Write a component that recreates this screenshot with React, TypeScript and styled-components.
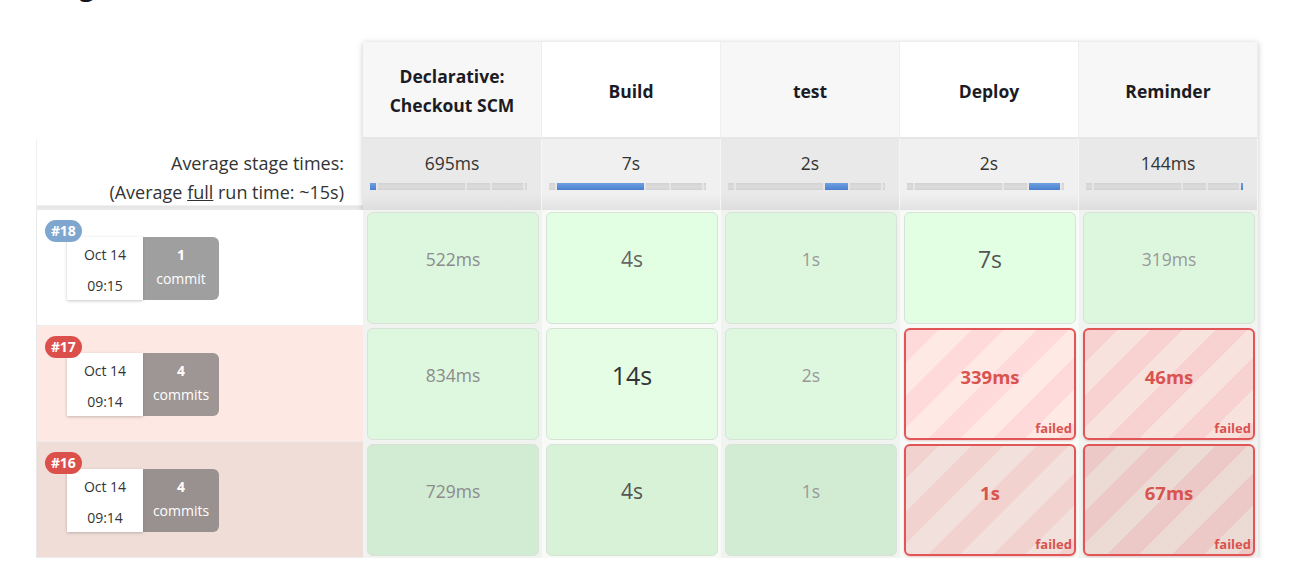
import React from 'react';
import styled, { createGlobalStyle, css } from 'styled-components';

const Global = createGlobalStyle`
  html, body { margin: 0; padding: 0; background: #fff; }
  body {
    font-family: "Open Sans", "Noto Sans", "DejaVu Sans", sans-serif;
    color: #333;
    overflow: hidden;
  }
`;

const Page = styled.div`
  padding-left: 36px;
`;

const Heading = styled.h2`
  margin: -29px 0 0 2px;
  height: 71px;
  font-size: 26px;
  line-height: 30px;
  font-weight: 700;
  color: #14141f;
`;

const Board = styled.div`
  display: flex;
  align-items: flex-start;
`;

const Labels = styled.div`
  width: 327px;
  display: flex;
  flex-direction: column;
`;

const HeaderSpacer = styled.div`
  height: 97px;
`;

const AvgLabel = styled.div`
  height: 71px;
  box-sizing: border-box;
  padding: 10px 19px 0 0;
  text-align: right;
  font-size: 18px;
  line-height: 29px;
  color: #333;
  border-left: 1px solid #f0f0f0;
  background: linear-gradient(#fff 0, #fff 66px, #e4e4e4 67px, #ececec 71px);
`;

const Underlined = styled.span`
  text-decoration: underline;
`;

const RunRow = styled.div<{ $bg: string }>`
  position: relative;
  height: 116px;
  box-sizing: border-box;
  background: ${p => p.$bg};
  border-left: 1px solid #e8e8e8;
  border-bottom: 1px solid #ececec;
  padding: 27px 0 0 30px;
`;

const Badge = styled.span<{ $color: string }>`
  position: absolute;
  left: 8px;
  top: 10px;
  z-index: 1;
  height: 22px;
  padding: 0 7px 0 6px;
  border-radius: 11px;
  background: ${p => p.$color};
  color: #fff;
  font-size: 14px;
  font-weight: 700;
  line-height: 22px;
  letter-spacing: -0.2px;
`;

const RunInfo = styled.div`
  display: flex;
  height: 63px;
`;

const DateBox = styled.div`
  width: 76px;
  background: #fff;
  box-shadow: 0 1px 3px rgba(0, 0, 0, 0.22);
  display: flex;
  flex-direction: column;
  align-items: center;
  justify-content: center;
  gap: 7px;
  font-size: 14px;
  line-height: 24px;
  color: #333;
  padding-top: 3px;
  box-sizing: border-box;
`;

const CommitBox = styled.div`
  width: 76px;
  border-radius: 0 6px 6px 0;
  background: rgba(95, 95, 95, 0.6);
  color: #fff;
  display: flex;
  flex-direction: column;
  align-items: center;
  justify-content: center;
  font-size: 14px;
  line-height: 24px;
  padding-bottom: 3px;
  box-sizing: border-box;
`;

const CommitCount = styled.span`
  font-weight: 700;
`;

const Stages = styled.div`
  width: 895px;
  display: grid;
  grid-template-columns: repeat(5, 179px);
  grid-template-rows: 97px 71px 116px 116px 116px;
  box-shadow: 0 1px 6px rgba(0, 0, 0, 0.22);
`;

const StageHead = styled.div<{ $odd: boolean }>`
  background: ${p => (p.$odd ? '#f7f7f7' : '#fff')};
  border-bottom: 2px solid #e6e6e6;
  border-right: 1px solid #efefef;
  display: flex;
  align-items: center;
  justify-content: center;
  text-align: center;
  font-size: 17.5px;
  font-weight: 700;
  line-height: 29px;
  color: #1b1b24;
  padding-top: 3px;
`;

const AvgCell = styled.div<{ $odd: boolean }>`
  background: ${p =>
    p.$odd
      ? 'linear-gradient(#e9e9e9 0, #e9e9e9 55px, #dedede 71px)'
      : 'linear-gradient(#f0f0f0 0, #f0f0f0 55px, #e2e2e2 71px)'};
  border-right: 1px solid #f6f6f6;
  display: flex;
  flex-direction: column;
  align-items: stretch;
  padding-top: 12px;
  box-sizing: border-box;
`;

const AvgTime = styled.div`
  text-align: center;
  font-size: 17.5px;
  line-height: 24px;
  color: #333;
`;

const Bar = styled.div`
  display: flex;
  height: 7px;
  margin: 8px 14px 0 7px;
  background: #d3d3d3;
  box-shadow: inset 0 0 0 1px #d9d9d9;
`;

const Seg = styled.div<{ $active: boolean; $last: boolean }>`
  box-sizing: border-box;
  background: ${p => (p.$active ? 'linear-gradient(#6f9fe2, #4b7fcf)' : 'linear-gradient(#d2d2d2, #dcdcdc 50%, #d2d2d2)')};
  border-right: ${p => (p.$last ? 'none' : '2px solid #e6e6e6')};
`;

const CellSlot = styled.div<{ $odd: boolean }>`
  background: ${p => (p.$odd ? '#f1f3f1' : '#f8faf8')};
  padding: 2px 3px 2px 4px;
  display: flex;
`;

const Cell = styled.div<{ $bg: string; $failed?: boolean }>`
  position: relative;
  flex: 1;
  border-radius: 6px;
  display: flex;
  align-items: center;
  justify-content: center;
  padding-bottom: 17px;
  box-sizing: border-box;
  ${p =>
    p.$failed
      ? css`
          border: 2px solid #e05656;
          background: ${p.$bg};
          box-shadow: 0 1px 2px rgba(200, 60, 60, 0.25);
          padding-bottom: 14px;
        `
      : css`
          border: 1px solid #d6e3d6;
          background: ${p.$bg};
        `}
`;

const Duration = styled.span<{ $size: number; $color: string; $bold?: boolean }>`
  font-size: ${p => p.$size}px;
  color: ${p => p.$color};
  font-weight: ${p => (p.$bold ? 700 : 400)};
  line-height: 1;
`;

const FailedTag = styled.span`
  position: absolute;
  right: 2px;
  bottom: 2px;
  font-size: 13px;
  font-weight: 700;
  color: #d9534f;
  line-height: 16px;
`;

const stages = [
  ['Declarative:', 'Checkout SCM'],
  ['Build'],
  ['test'],
  ['Deploy'],
  ['Reminder'],
];

const segWidths = [5.1, 57, 15.3, 21.3, 1.3];
const avgTimes = ['695ms', '7s', '2s', '2s', '144ms'];

type CellData = { t: string; size: number; color: string; failed?: boolean };

const g = (t: string, size = 17.5, color = '#8c8c8c'): CellData => ({ t, size, color });
const f = (t: string): CellData => ({ t, size: 18.5, color: '#d9534f', failed: true });

const runs = [
  {
    id: '#18',
    badge: '#7fa6cf',
    bg: '#ffffff',
    time: '09:15',
    count: '1',
    label: 'commit',
    green: ['#ddf7de', '#e3ffe3'],
    stripes: [['', ''], ['', '']],
    cells: [g('522ms'), g('4s', 21, '#666'), g('1s', 17.5, '#999'), g('7s', 23, '#555'), g('319ms', 17.5, '#999')],
  },
  {
    id: '#17',
    badge: '#db504b',
    bg: '#fde8e4',
    time: '09:14',
    count: '4',
    label: 'commits',
    green: ['#def7df', '#e4fde4'],
    stripes: [['#ffdada', '#ffe9e5'], ['#f7d2d1', '#f8e2de']],
    cells: [g('834ms'), g('14s', 25, '#333'), g('2s', 17.5, '#999'), f('339ms'), f('46ms')],
  },
  {
    id: '#16',
    badge: '#db504b',
    bg: '#f0ddd8',
    time: '09:14',
    count: '4',
    label: 'commits',
    green: ['#d2ebd3', '#d8f2d8'],
    stripes: [['#f1d2cf', '#f2e0dc'], ['#ecc8c6', '#ecdad4']],
    cells: [g('729ms'), g('4s', 21, '#555'), g('1s', 17.5, '#999'), f('1s'), f('67ms')],
  },
];

const stripe = (a: string, b: string) =>
  `repeating-linear-gradient(135deg, ${a} 0 23px, ${b} 23px 46px)`;

export default function App() {
  return (
    <Page>
      <Global />
      <Heading>Stage View</Heading>
      <Board>
        <Labels>
          <HeaderSpacer />
          <AvgLabel>
            Average stage times:
            <br />
            (Average <Underlined>full</Underlined> run time: ~15s)
          </AvgLabel>
          {runs.map(r => (
            <RunRow key={r.id} $bg={r.bg}>
              <Badge $color={r.badge}>{r.id}</Badge>
              <RunInfo>
                <DateBox>
                  <span>Oct 14</span>
                  <span>{r.time}</span>
                </DateBox>
                <CommitBox>
                  <CommitCount>{r.count}</CommitCount>
                  <span>{r.label}</span>
                </CommitBox>
              </RunInfo>
            </RunRow>
          ))}
        </Labels>
        <Stages>
          {stages.map((s, i) => (
            <StageHead key={'h' + i} $odd={i % 2 === 0}>
              <div>
                {s.map((line, j) => (
                  <div key={j}>{line}</div>
                ))}
              </div>
            </StageHead>
          ))}
          {avgTimes.map((t, i) => (
            <AvgCell key={'a' + i} $odd={i % 2 === 0}>
              <AvgTime>{t}</AvgTime>
              <Bar>
                {segWidths.map((w, k) => (
                  <Seg key={k} $active={k === i} $last={k === segWidths.length - 1} style={{ width: `${w}%` }} />
                ))}
              </Bar>
            </AvgCell>
          ))}
          {runs.map(r =>
            r.cells.map((c, i) => {
              const odd = i % 2 === 0;
              const bg = c.failed
                ? stripe(r.stripes[i === 3 ? 0 : 1][0], r.stripes[i === 3 ? 0 : 1][1])
                : r.green[odd ? 0 : 1];
              return (
                <CellSlot key={r.id + i} $odd={odd}>
                  <Cell $bg={bg} $failed={c.failed}>
                    <Duration $size={c.size} $color={c.color} $bold={c.failed}>
                      {c.t}
                    </Duration>
                    {c.failed && <FailedTag>failed</FailedTag>}
                  </Cell>
                </CellSlot>
              );
            })
          )}
        </Stages>
      </Board>
    </Page>
  );
}
